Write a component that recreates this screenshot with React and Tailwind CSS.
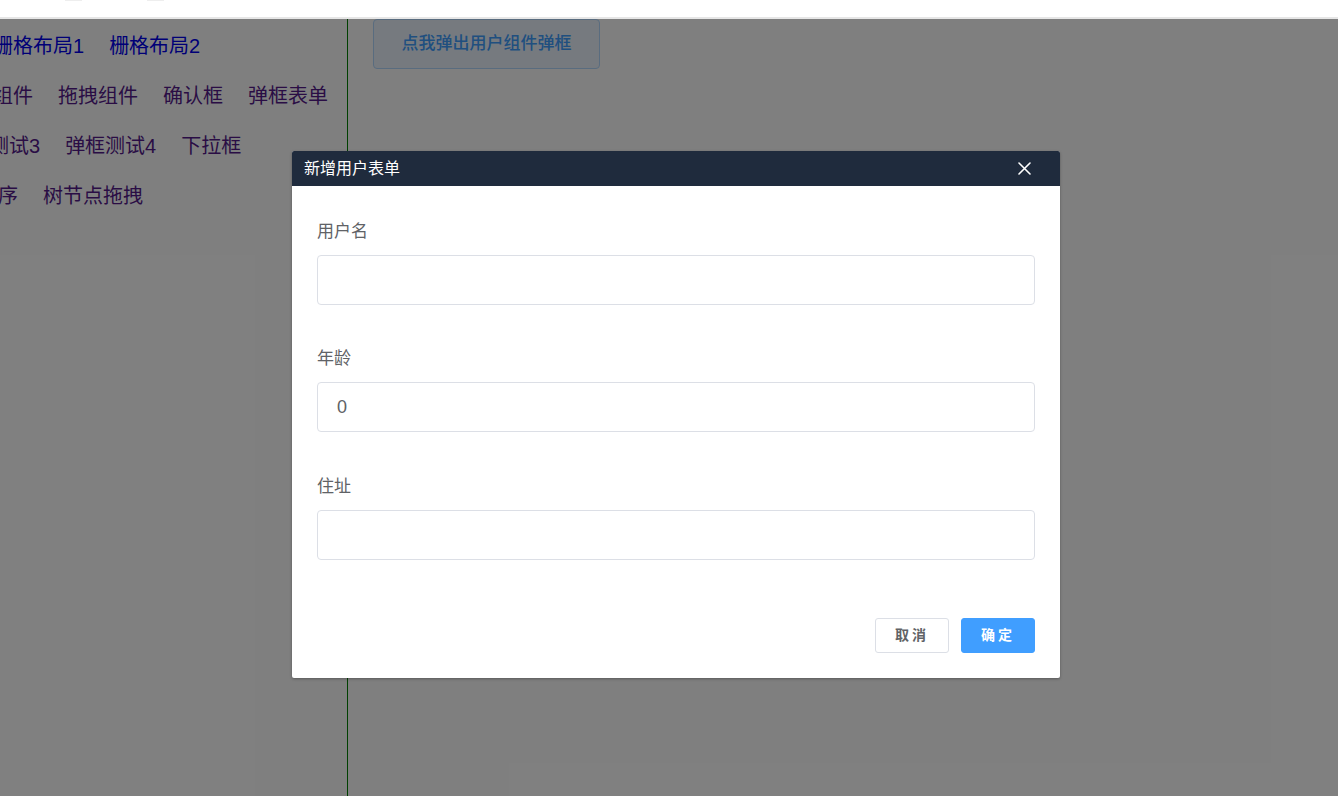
import React from "react";

const FONT = { fontFamily: '"Liberation Sans", "Noto Sans CJK SC", sans-serif' };

function Row({ offset, color, items }) {
  return (
    <div className="flex h-[50px] items-center gap-[25px] whitespace-nowrap text-[20px]" style={{ marginLeft: offset }}>
      {items.map((t) => (
        <a key={t} href="#" className={`${color} no-underline`}>
          {t}
        </a>
      ))}
    </div>
  );
}

function Field({ label, value }) {
  return (
    <div className="flex flex-col">
      <div className="flex h-[24px] items-center text-[17px] text-[#606266]">{label}</div>
      <div className="mt-[11px] flex h-[50px] items-center rounded-[4px] border border-[#dcdfe6] bg-white px-[19px] text-[18px] text-[#606266]">
        {value}
      </div>
    </div>
  );
}

export default function App() {
  return (
    <div className="relative h-[796px] w-full overflow-hidden bg-white" style={FONT}>
      <div className="flex h-[19px] border-b-2 border-[#e6e6e6] bg-white">
        <div className="ml-[65px] h-[1px] w-[17px] bg-[#eeeeee]" />
        <div className="ml-[65px] h-[1px] w-[17px] bg-[#eeeeee]" />
      </div>
      <div className="flex h-[777px]">
        <aside className="w-[348px] shrink-0 overflow-hidden border-r border-[#008000] pt-[2px]">
          <Row offset={-7} color="text-[#0000ee]" items={["栅格布局1", "栅格布局2"]} />
          <Row offset={-47} color="text-[#551a8b]" items={["表单组件", "拖拽组件", "确认框", "弹框表单"]} />
          <Row offset={-51} color="text-[#551a8b]" items={["弹框测试3", "弹框测试4", "下拉框"]} />
          <Row offset={-22} color="text-[#551a8b]" items={["排序", "树节点拖拽"]} />
        </aside>
        <main className="pl-[25px]">
          <button className="flex h-[50px] w-[227px] items-center justify-center rounded-[4px] border border-[#b3d8ff] bg-[#ecf5ff] text-[17px] font-medium text-[#409eff]">
            点我弹出用户组件弹框
          </button>
        </main>
      </div>

      <div className="absolute inset-x-0 top-[19px] bottom-0 bg-black/50">
        <div className="absolute left-[292px] top-[132px] w-[768px] overflow-hidden rounded-[2px] bg-white shadow-[0_1px_3px_rgba(0,0,0,0.3)]">
          <div className="flex h-[35px] items-center justify-between bg-[#1f2b3d] pl-[12px] pr-[29px]">
            <span className="text-[16px] text-white">新增用户表单</span>
            <svg width="13" height="13" viewBox="0 0 13 13" fill="none" stroke="white" strokeWidth="1.6" strokeLinecap="round">
              <path d="M1 1L12 12M12 1L1 12" />
            </svg>
          </div>
          <div className="flex flex-col px-[25px] pt-[34px]">
            <Field label="用户名" value="" />
            <div className="mt-[42px]">
              <Field label="年龄" value="0" />
            </div>
            <div className="mt-[43px]">
              <Field label="住址" value="" />
            </div>
          </div>
          <div className="flex justify-end gap-[12px] px-[25px] pb-[25px] pt-[58px]">
            <button className="flex h-[35px] w-[74px] items-center justify-center rounded-[3px] border border-[#dcdfe6] bg-white text-[14px] font-bold tracking-[3px] text-[#606266]">
              取消
            </button>
            <button className="flex h-[35px] w-[74px] items-center justify-center rounded-[3px] border border-[#409eff] bg-[#409eff] text-[14px] font-bold tracking-[3px] text-white">
              确定
            </button>
          </div>
        </div>
      </div>
    </div>
  );
}
